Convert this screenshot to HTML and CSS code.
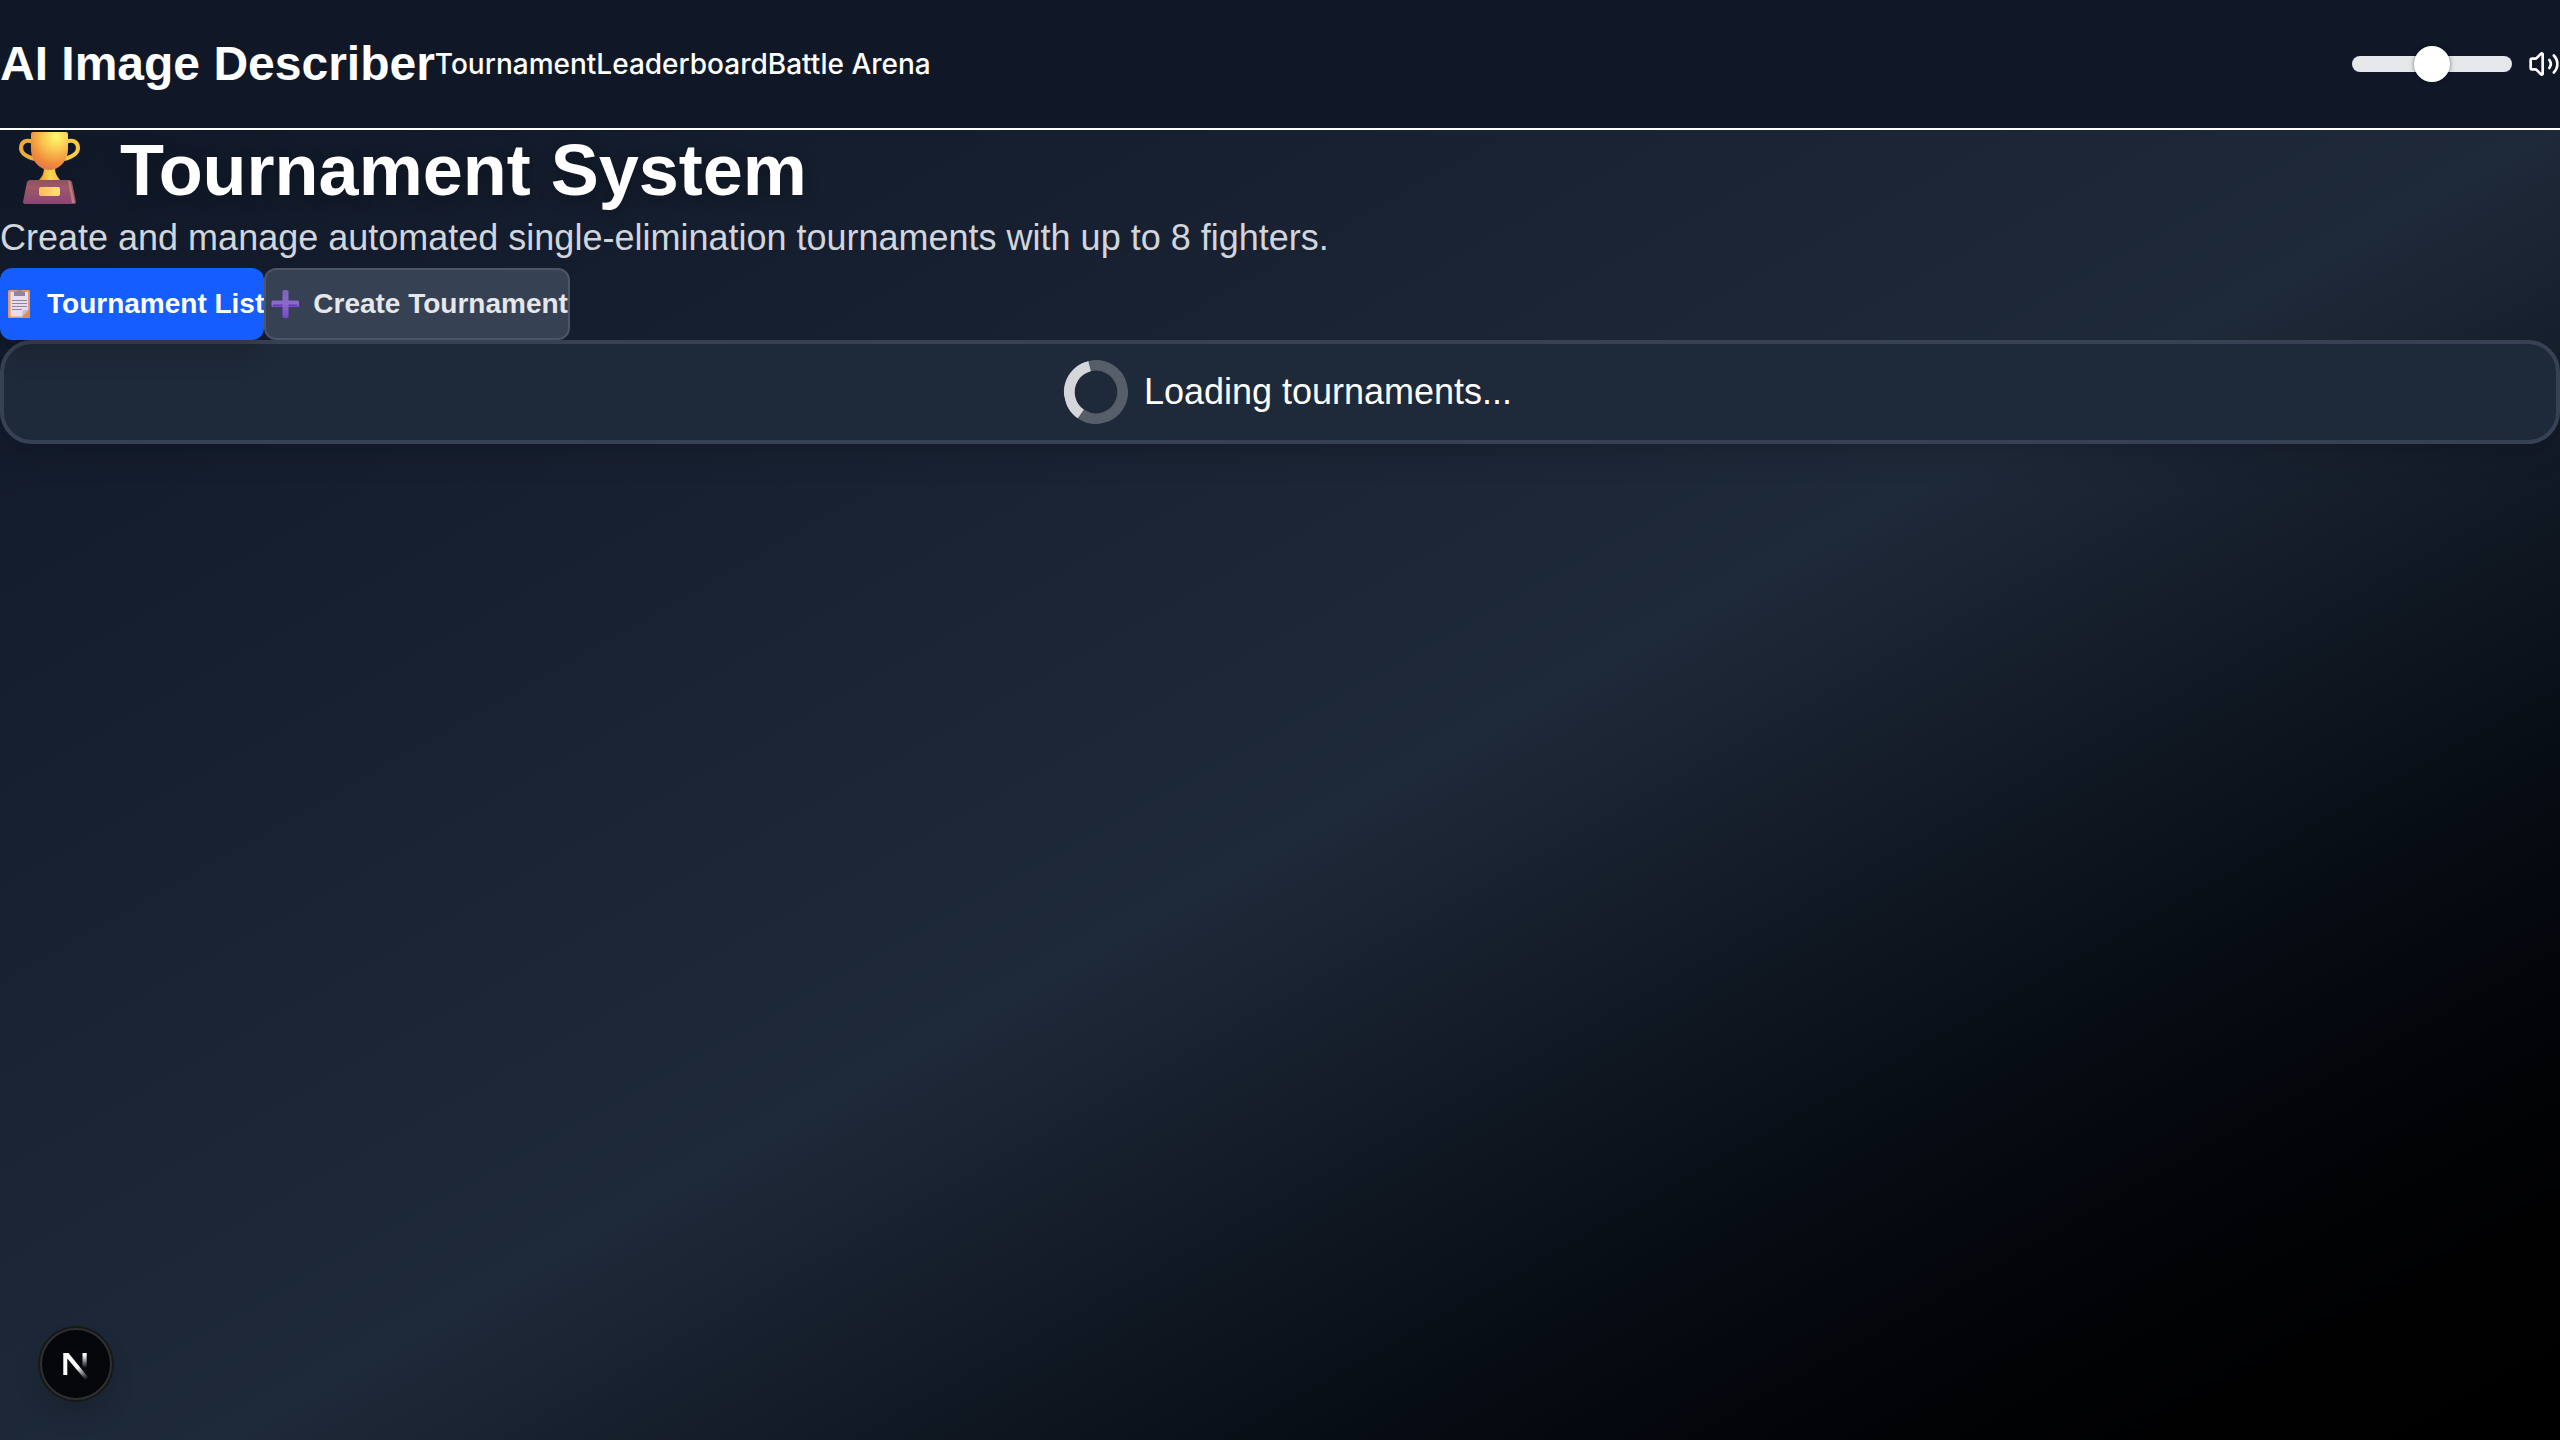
FILE: index.html
```html
<!DOCTYPE html>
<html lang="en">
<head>
<meta charset="utf-8">
<meta name="viewport" content="width=device-width, initial-scale=1">
<title>AI Image Describer</title>
<link rel="stylesheet" href="styles.css">
</head>
<body>
<header class="site-header">
  <nav class="site-nav">
    <a class="brand" href="#">AI Image Describer</a>
    <a class="nav-link" href="#">Tournament</a>
    <a class="nav-link" href="#">Leaderboard</a>
    <a class="nav-link" href="#">Battle Arena</a>
  </nav>
  <div class="volume">
    <input class="volume-slider" type="range" min="0" max="100" value="50" aria-label="Volume">
    <svg class="volume-icon" viewBox="0 0 24 24" fill="none" stroke="currentColor" stroke-width="2" stroke-linecap="round" stroke-linejoin="round" aria-hidden="true">
      <path d="M11 4.702a.705.705 0 0 0-1.203-.498L6.413 7.587A1.4 1.4 0 0 1 5.416 8H3a1 1 0 0 0-1 1v6a1 1 0 0 0 1 1h2.416a1.4 1.4 0 0 1 .997.413l3.383 3.384A.705.705 0 0 0 11 19.298z"/>
      <path d="M16 9a5 5 0 0 1 0 6"/>
      <path d="M19.364 18.364a9 9 0 0 0 0-12.728"/>
    </svg>
  </div>
</header>
<main class="page">
  <h1 class="title">
    <svg class="trophy" viewBox="0 0 100 80" aria-hidden="true">
      <defs>
        <radialGradient id="cup" cx="0.68" cy="0.12" r="0.95">
          <stop offset="0" stop-color="#fffb70"/>
          <stop offset="0.35" stop-color="#fbcb52"/>
          <stop offset="0.75" stop-color="#f08d3c"/>
          <stop offset="1" stop-color="#e27250"/>
        </radialGradient>
        <linearGradient id="stem"><stop offset="0" stop-color="#e88b2e"/><stop offset="0.55" stop-color="#fdd850"/><stop offset="1" stop-color="#f5b63e"/></linearGradient>
        <linearGradient id="base" x2="0" y2="1"><stop offset="0" stop-color="#8e5359"/><stop offset="0.3" stop-color="#9e5968"/><stop offset="1" stop-color="#8b4674"/></linearGradient>
        <linearGradient id="plate"><stop offset="0" stop-color="#ffb95c"/><stop offset="1" stop-color="#ffe56a"/></linearGradient>
      </defs>
      <path d="M33 12C26 9 21 12 21 18c0 6 6 9 14 11" fill="none" stroke="#edac3b" stroke-width="4"/>
      <path d="M66 12c7-3 12 0 12 6s-6 9-14 11" fill="none" stroke="#fbcb45" stroke-width="4"/>
      <path d="M44 37h11c0 6 1 8 6 14H38c5-5 6-8 6-14z" fill="url(#stem)"/>
      <path d="M33 2h33q2 0 2 2v15c0 12-9 21-18.500 21S31 31 31 19V4q0-2 2-2z" fill="url(#cup)"/>
      <path d="M30 50h39q2 0 3 2l4 20q0 2-2 2H25q-2 0-2-2l4-20q1-2 3-2z" fill="url(#base)"/>
      <path d="M68 51h2l5 22h-3z" fill="#b87e7b"/>
      <rect x="39" y="57" width="21" height="9" rx="2" fill="url(#plate)"/>
    </svg>
    Tournament System
  </h1>
  <p class="lead">Create and manage automated single-elimination tournaments with up to 8 fighters.</p>
  <div class="tabs">
    <button class="tab tab-active" type="button">
      <svg class="tab-icon" viewBox="0 0 39 32" aria-hidden="true">
        <rect x="8" y="2" width="22" height="28" rx="1.500" fill="#e09a68"/>
        <path d="M10.500 4h17.500V22L22 28.500H12q-1.500 0-1.500-1.500z" fill="#e8dcf0"/>
        <path d="M22 28.500l1-6 6-1z" fill="#c9b3d8"/>
        <path d="M30 21.500V30h-8z" fill="#e08b52"/>
        <path d="M14 4.500q0-1 1-1h1.500q1-1.500 3-1.500t3 1.500H24q1 0 1 1V8H14z" fill="#8e8595"/>
        <path d="M12 12.500h15M12 15.500h15M12 18.500h15M12 21.500h10" stroke="#8f8498"/>
      </svg>
      Tournament List
    </button>
    <button class="tab" type="button">
      <svg class="tab-icon" viewBox="0 0 39 32" aria-hidden="true">
        <defs><linearGradient id="plus" x2="0" y2="1"><stop offset="0" stop-color="#7d63b4"/><stop offset="0.5" stop-color="#8a6acb"/><stop offset="1" stop-color="#7846d2"/></linearGradient></defs>
        <path d="M16.500 3.500q0-1.500 1.500-1.500h3q1.500 0 1.500 1.500V12.500h9q1.500 0 1.500 1.500v3.500q0 1.500-1.500 1.500h-9v9.500q0 1.500-1.500 1.500h-3q-1.500 0-1.500-1.500V19h-9.500q-1.500 0-1.500-1.500V14q0-1.500 1.500-1.500h9.500z" fill="url(#plus)"/>
        <path d="M7 17.500h9.500M22.500 17.500h9" stroke="#6a35c4" stroke-width="2"/>
      </svg>
      Create Tournament
    </button>
  </div>
  <section class="card" role="status">
    <svg class="spinner" viewBox="0 0 24 24" fill="none" aria-hidden="true">
      <circle cx="12" cy="12" r="10" stroke="currentColor" stroke-width="4" opacity="0.250"/>
      <path fill="currentColor" opacity="0.750" d="M4 12a8 8 0 018-8V0C5.373 0 0 5.373 0 12h4zm2 5.291A7.962 7.962 0 014 12H0c0 3.042 1.135 5.824 3 7.938l3-2.647z"/>
    </svg>
    <span>Loading tournaments...</span>
  </section>
</main>
<button class="dev-badge" type="button" aria-label="Open developer tools">
  <svg class="dev-logo" viewBox="0 0 40 40" aria-hidden="true">
    <defs>
      <linearGradient id="diag" gradientUnits="userSpaceOnUse" x1="22" y1="23" x2="30" y2="34"><stop stop-color="#fff"/><stop offset="1" stop-color="#fff" stop-opacity="0.100"/></linearGradient>
      <linearGradient id="bar" gradientUnits="userSpaceOnUse" x1="28" y1="11" x2="28" y2="24"><stop stop-color="#fff"/><stop offset="1" stop-color="#fff" stop-opacity="0"/></linearGradient>
    </defs>
    <path d="M7.300 9H12.500L32.300 33.500 29.500 36 11.300 14.500V31H7.300z" fill="url(#diag)"/>
    <path d="M26.500 9h4.200v15h-4.200z" fill="url(#bar)"/>
  </svg>
</button>
</body>
</html>
```
FILE: styles.css
```css
* {
  box-sizing: border-box;
  margin: 0;
}

body {
  display: flex;
  flex-direction: column;
  min-height: 100vh;
  background: #101828;
  color: #fff;
  font-family: "Liberation Sans", Arial, sans-serif;
}

.site-header {
  display: flex;
  align-items: center;
  justify-content: space-between;
  height: 130px;
  border-bottom: 2px solid #fff;
  background: #101828;
}

.site-nav {
  display: flex;
  align-items: center;
}

.site-nav a {
  color: inherit;
  text-decoration: none;
}

.brand {
  font-size: 48px;
  line-height: 64px;
  font-weight: 700;
}

.nav-link {
  font-family: Inter, sans-serif;
  font-size: 28px;
  line-height: 40px;
  font-weight: 500;
}

.volume {
  display: flex;
  align-items: center;
  gap: 16px;
}

.volume-slider {
  appearance: none;
  width: 160px;
  height: 16px;
  border-radius: 8px;
  background: #e5e7eb;
}

.volume-slider::-webkit-slider-thumb {
  appearance: none;
  width: 36px;
  height: 36px;
  border-radius: 50%;
  background: #fff;
  box-shadow: 0 0 4px rgb(0 0 0 / 0.5);
}

.volume-icon {
  width: 32px;
  height: 32px;
}

.page {
  flex: 1;
  background: linear-gradient(to bottom right in oklab, #101828, #1e2939, #000) no-repeat;
  background-size: 100% 100vh;
}

.title {
  display: flex;
  gap: 20px;
  font-size: 72px;
  line-height: 80px;
  font-weight: 700;
  text-shadow: 0 4px 16px rgb(0 0 0 / 0.3);
}

.trophy {
  width: 100px;
  height: 80px;
}

.lead {
  color: #d1d5dc;
  font-size: 36px;
  line-height: 56px;
}

.tabs {
  display: flex;
  padding-top: 2px;
}

.tab {
  display: flex;
  align-items: center;
  gap: 8px;
  height: 72px;
  padding: 0;
  border: 2px solid #4a5565;
  border-radius: 12px;
  background: #364153;
  color: #e5e7eb;
  font-family: inherit;
  font-size: 28px;
  line-height: 40px;
  font-weight: 600;
}

.tab-active {
  border: 0;
  background: #155dfc;
  color: #fff;
  box-shadow: 0 20px 30px -6px rgb(0 0 0 / 0.1), 0 8px 12px -8px rgb(0 0 0 / 0.1);
}

.tab-icon {
  width: 39px;
  height: 32px;
}

.card {
  display: flex;
  align-items: center;
  justify-content: center;
  padding: 16px;
  border: 4px solid #364153;
  border-radius: 32px;
  background: #1e2939;
  box-shadow: 0 20px 30px -6px rgb(0 0 0 / 0.1), 0 8px 12px -8px rgb(0 0 0 / 0.1);
  font-size: 36px;
  line-height: 56px;
}

.spinner {
  width: 64px;
  height: 64px;
  margin: 0 16px;
  transform: rotate(-14deg);
}

.dev-badge {
  position: fixed;
  left: 40px;
  bottom: 40px;
  display: grid;
  place-items: center;
  width: 72px;
  height: 72px;
  padding: 0;
  border: 2px solid #2e2f31;
  border-radius: 50%;
  background: #05060a;
  color: #fff;
  box-shadow: 0 0 0 2px #171717, 0 16px 32px -8px rgb(0 0 0 / 0.24);
}

.dev-logo {
  width: 40px;
  height: 40px;
}
```
